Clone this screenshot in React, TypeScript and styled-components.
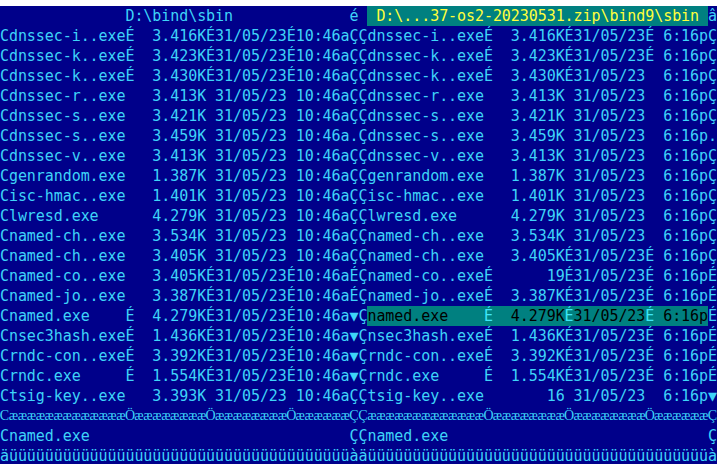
import { FC } from 'react';
import styled, { createGlobalStyle } from 'styled-components';

type Tone = 'plain' | 'title' | 'cursor' | 'cursorSep';

interface Run {
  text: string;
  tone?: Tone;
}

interface Line {
  runs: Run[];
  glyphs?: 'mono' | 'fallback';
}

const GlobalStyle = createGlobalStyle`
  html, body {
    margin: 0;
    padding: 0;
    background: #ffffff;
    height: 464px;
    overflow: hidden;
  }
`;

// one file row: border, name(13), sep, size(8), sep, date(8), sep, time(6), border
const entry = (
  border: string,
  name: string,
  s1: string,
  size: string,
  s2: string,
  s3: string,
  time: string,
  end: string,
  date = '31/05/23',
): string => border + name.padEnd(13) + s1 + size.padStart(8) + s2 + date + s3 + time.padStart(6) + end;

const plain = (text: string): Line => ({ runs: [{ text }] });

const divider = (border: string, end: string): Line => ({
  runs: [{ text: border + 'æ'.repeat(13) + 'Ö' + 'æ'.repeat(8) + 'Ö' + 'æ'.repeat(8) + 'Ö' + 'æ'.repeat(6) + end }],
  glyphs: 'fallback',
});

const L = 'C';
const R = 'Ç';
const LT = '10:46a';
const RT = '6:16p';

const leftLines: Line[] = [
  plain(' '.repeat(13) + ' D:\\bind\\sbin '.padEnd(26) + 'é'),
  plain(entry(L, 'dnssec-i..exe', 'É', '3.416K', 'É', 'É', LT, 'Ç')),
  plain(entry(L, 'dnssec-k..exe', 'É', '3.423K', 'É', 'É', LT, 'Ç')),
  plain(entry(L, 'dnssec-k..exe', 'É', '3.430K', 'É', 'É', LT, 'Ç')),
  plain(entry(L, 'dnssec-r..exe', ' ', '3.413K', ' ', ' ', LT, 'Ç')),
  plain(entry(L, 'dnssec-s..exe', ' ', '3.421K', ' ', ' ', LT, 'Ç')),
  plain(entry(L, 'dnssec-s..exe', ' ', '3.459K', ' ', ' ', LT, '.')),
  plain(entry(L, 'dnssec-v..exe', ' ', '3.413K', ' ', ' ', LT, 'Ç')),
  plain(entry(L, 'genrandom.exe', ' ', '1.387K', ' ', ' ', LT, 'Ç')),
  plain(entry(L, 'isc-hmac..exe', ' ', '1.401K', ' ', ' ', LT, 'Ç')),
  plain(entry(L, 'lwresd.exe', ' ', '4.279K', ' ', ' ', LT, 'Ç')),
  plain(entry(L, 'named-ch..exe', ' ', '3.534K', ' ', ' ', LT, 'Ç')),
  plain(entry(L, 'named-ch..exe', ' ', '3.405K', ' ', ' ', LT, 'Ç')),
  plain(entry(L, 'named-co..exe', ' ', '3.405K', 'É', 'É', LT, 'É')),
  plain(entry(L, 'named-jo..exe', ' ', '3.387K', 'É', 'É', LT, 'É')),
  plain(entry(L, 'named.exe', 'É', '4.279K', 'É', 'É', LT, '▼')),
  plain(entry(L, 'nsec3hash.exe', 'É', '1.436K', 'É', 'É', LT, '▼')),
  plain(entry(L, 'rndc-con..exe', 'É', '3.392K', 'É', 'É', LT, '▼')),
  plain(entry(L, 'rndc.exe', 'É', '1.554K', 'É', 'É', LT, '▼')),
  plain(entry(L, 'tsig-key..exe', ' ', '3.393K', ' ', ' ', LT, 'Ç')),
  divider(L, 'Ç'),
  plain((L + 'named.exe').padEnd(39) + 'Ç'),
  plain('ä' + 'ü'.repeat(38) + 'à'),
];

const rightLines: Line[] = [
  {
    runs: [
      { text: ' ' },
      { text: ' D:\\...37-os2-20230531.zip\\bind9\\sbin ', tone: 'title' },
      { text: 'â' },
    ],
  },
  plain(entry(R, 'dnssec-i..exe', 'É', '3.416K', 'É', 'É', RT, 'Ç')),
  plain(entry(R, 'dnssec-k..exe', 'É', '3.423K', 'É', 'É', RT, 'Ç')),
  plain(entry(R, 'dnssec-k..exe', 'É', '3.430K', 'É', ' ', RT, 'Ç')),
  plain(entry(R, 'dnssec-r..exe', ' ', '3.413K', ' ', ' ', RT, 'Ç')),
  plain(entry(R, 'dnssec-s..exe', ' ', '3.421K', ' ', ' ', RT, 'Ç')),
  plain(entry(R, 'dnssec-s..exe', ' ', '3.459K', ' ', ' ', RT, '.')),
  plain(entry(R, 'dnssec-v..exe', ' ', '3.413K', ' ', ' ', RT, 'Ç')),
  plain(entry(R, 'genrandom.exe', ' ', '1.387K', ' ', ' ', RT, 'Ç')),
  plain(entry(R, 'isc-hmac..exe', ' ', '1.401K', ' ', ' ', RT, 'Ç')),
  plain(entry(R, 'lwresd.exe', ' ', '4.279K', ' ', ' ', RT, 'Ç')),
  plain(entry(R, 'named-ch..exe', ' ', '3.534K', ' ', ' ', RT, 'Ç')),
  plain(entry(R, 'named-ch..exe', ' ', '3.405K', 'É', 'É', RT, 'Ç')),
  plain(entry(R, 'named-co..exe', 'É', '19', 'É', 'É', RT, 'É')),
  plain(entry(R, 'named-jo..exe', 'É', '3.387K', 'É', 'É', RT, 'É')),
  {
    runs: [
      { text: R },
      { text: 'named.exe    ', tone: 'cursor' },
      { text: 'É', tone: 'cursorSep' },
      { text: '  4.279K', tone: 'cursor' },
      { text: 'É', tone: 'cursorSep' },
      { text: '31/05/23', tone: 'cursor' },
      { text: 'É', tone: 'cursorSep' },
      { text: ' 6:16p', tone: 'cursor' },
      { text: 'É' },
    ],
  },
  plain(entry(R, 'nsec3hash.exe', 'É', '1.436K', 'É', 'É', RT, 'É')),
  plain(entry(R, 'rndc-con..exe', 'É', '3.392K', 'É', 'É', RT, 'É')),
  plain(entry(R, 'rndc.exe', 'É', '1.554K', 'É', 'É', RT, 'É')),
  plain(entry(R, 'tsig-key..exe', ' ', '16', ' ', ' ', RT, '▼')),
  divider(R, 'Ç'),
  plain((R + 'named.exe').padEnd(39) + 'Ç'),
  plain('ä' + 'ü'.repeat(38) + 'à'),
];

const Screen = styled.div`
  padding-top: 6px;
  background: #ffffff;
`;

const Console = styled.div`
  display: flex;
  width: 717px;
  background: #00008a;
`;

const Panel = styled.div`
  flex: 1 1 0;
  min-width: 0;
  display: flex;
  flex-direction: column;
`;

const Row = styled.div<{ $glyphs: 'mono' | 'fallback' }>`
  display: grid;
  grid-template-columns: repeat(40, minmax(0, 1fr));
  height: 20px;
  line-height: 20px;
  font-family: ${({ $glyphs }) =>
    $glyphs === 'fallback' ? '"Liberation Serif", serif' : '"DejaVu Sans Mono", monospace'};
  font-size: ${({ $glyphs }) => ($glyphs === 'fallback' ? '14px' : '15px')};
`;

const toneColor: Record<Tone, string> = {
  plain: '#3ed4f8',
  title: '#ffff3c',
  cursor: '#000000',
  cursorSep: '#3ee8f8',
};

const Cell = styled.span<{ $tone: Tone }>`
  display: flex;
  justify-content: center;
  white-space: pre;
  overflow: visible;
  color: ${({ $tone }) => toneColor[$tone]};
  background: ${({ $tone }) => ($tone === 'plain' ? 'transparent' : '#008080')};
`;

const PanelView: FC<{ lines: Line[] }> = ({ lines }) => (
  <Panel>
    {lines.map((line, r) => (
      <Row key={r} $glyphs={line.glyphs ?? 'mono'}>
        {line.runs.flatMap((run, i) =>
          Array.from(run.text).map((ch, j) => (
            <Cell key={`${i}-${j}`} $tone={run.tone ?? 'plain'}>
              {ch}
            </Cell>
          )),
        )}
      </Row>
    ))}
  </Panel>
);

const App: FC = () => (
  <>
    <GlobalStyle />
    <Screen>
      <Console>
        <PanelView lines={leftLines} />
        <PanelView lines={rightLines} />
      </Console>
    </Screen>
  </>
);

export default App;
